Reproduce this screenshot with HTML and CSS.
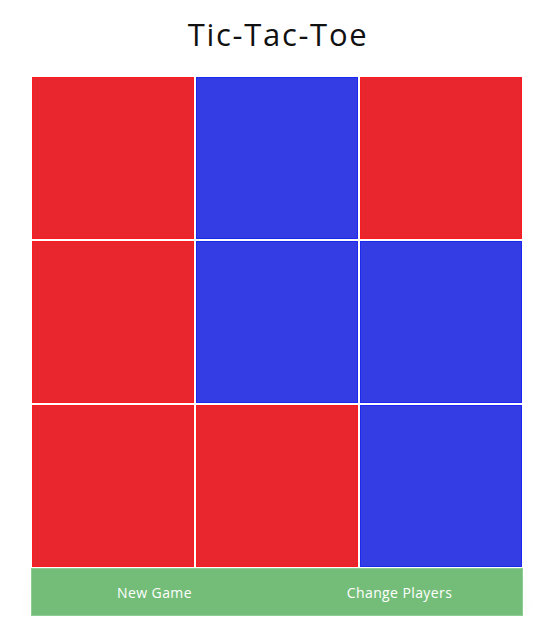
FILE: index.html
```html
<!DOCTYPE html>
<html lang="en">
<head>
    <meta charset="UTF-8">
    <meta name="viewport" content="width=device-width, initial-scale=1.0">
    <title>Tic-Tac-Toe</title>
    <link rel="stylesheet" href="styles.css">
</head>
<body>

    <div id="game">
        <h1>Tic-Tac-Toe</h1>
        <div class="board">
            <div class="cell red"></div>
            <div class="cell blue"></div>
            <div class="cell red"></div>
            <div class="cell red"></div>
            <div class="cell blue"></div>
            <div class="cell blue"></div>
            <div class="cell red"></div>
            <div class="cell red"></div>
            <div class="cell blue"></div>
        </div>
        <div class="controls">
            <button type="button">New Game</button>
            <button type="button">Change Players</button>
        </div>
    </div>

</body>
</html>
```

FILE: styles.css
```css
body {
    font-family: "Open Sans", Arial, sans-serif;
    background-color: #fff;
    margin: 0;
}
#game {
    width: 492px;
    margin-left: 31px;
}
h1 {
    font-size: 31px;
    font-weight: 400;
    letter-spacing: 1.7px;
    text-align: center;
    color: #111;
    margin: 0 -4px 0 -2px;
    padding-top: 12px;
    height: 76px;
    line-height: 44px;
    box-sizing: border-box;
}
.board {
    display: grid;
    grid-template-columns: repeat(3, 164px);
    grid-auto-rows: 164px;
}
.cell {
    border: 1px solid #fff;
}
.red {
    background-color: #e9262d;
    box-shadow: inset 0 0 0 1px #fb1a1f;
}
.blue {
    background-color: #343ce3;
    box-shadow: inset 0 0 0 1px #1c27f0;
}
.controls {
    display: flex;
    height: 48px;
    background-color: #74bd79;
    border: 1px solid #8fcc93;
    box-sizing: border-box;
    box-shadow: 0 12px 18px rgba(0, 0, 0, 0.025);
}
.controls button {
    flex: 1;
    background: none;
    border: none;
    color: #fff;
    font-family: "Open Sans", Arial, sans-serif;
    font-size: 14px;
    letter-spacing: 0.4px;
    cursor: pointer;
}
```
